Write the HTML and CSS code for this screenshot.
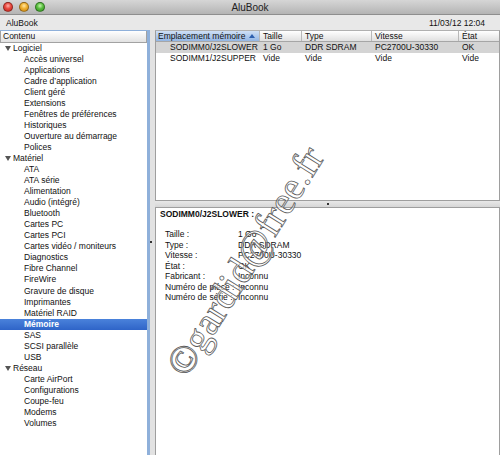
FILE: index.html
```html
<!DOCTYPE html>
<html lang="fr">
<head>
<meta charset="utf-8">
<title>AluBook</title>
<link rel="stylesheet" href="styles.css">
</head>
<body>
<div class="window">
  <div class="titlebar">
    <div class="lights">
      <span class="light red"></span>
      <span class="light yellow"></span>
      <span class="light green"></span>
    </div>
    <div class="title">AluBook</div>
  </div>
  <div class="infobar">
    <span>AluBook</span>
    <span>11/03/12 12:04</span>
  </div>
  <div class="main">
    <div class="sidebar">
      <div class="side-head">Contenu</div>
      <ul class="tree">
        <li class="group"><span class="tri"></span>Logiciel</li>
        <li>Accès universel</li>
        <li>Applications</li>
        <li>Cadre d’application</li>
        <li>Client géré</li>
        <li>Extensions</li>
        <li>Fenêtres de préférences</li>
        <li>Historiques</li>
        <li>Ouverture au démarrage</li>
        <li>Polices</li>
        <li class="group"><span class="tri"></span>Matériel</li>
        <li>ATA</li>
        <li>ATA série</li>
        <li>Alimentation</li>
        <li>Audio (intégré)</li>
        <li>Bluetooth</li>
        <li>Cartes PC</li>
        <li>Cartes PCI</li>
        <li>Cartes vidéo / moniteurs</li>
        <li>Diagnostics</li>
        <li>Fibre Channel</li>
        <li>FireWire</li>
        <li>Gravure de disque</li>
        <li>Imprimantes</li>
        <li>Matériel RAID</li>
        <li class="sel">Mémoire</li>
        <li>SAS</li>
        <li>SCSI parallèle</li>
        <li>USB</li>
        <li class="group"><span class="tri"></span>Réseau</li>
        <li>Carte AirPort</li>
        <li>Configurations</li>
        <li>Coupe-feu</li>
        <li>Modems</li>
        <li>Volumes</li>
      </ul>
    </div>
    <div class="vsplit"><span class="dot"></span></div>
    <div class="right">
      <div class="table-pane">
        <div class="trow thead">
          <div class="c c1 sorted">Emplacement mémoire<span class="sort"></span></div>
          <div class="c c2">Taille</div>
          <div class="c c3">Type</div>
          <div class="c c4">Vitesse</div>
          <div class="c c5">État</div>
        </div>
        <div class="trow selrow">
          <div class="c c1 ind">SODIMM0/J2SLOWER</div>
          <div class="c c2">1 Go</div>
          <div class="c c3">DDR SDRAM</div>
          <div class="c c4">PC2700U-30330</div>
          <div class="c c5">OK</div>
        </div>
        <div class="trow">
          <div class="c c1 ind">SODIMM1/J2SUPPER</div>
          <div class="c c2">Vide</div>
          <div class="c c3">Vide</div>
          <div class="c c4">Vide</div>
          <div class="c c5">Vide</div>
        </div>
      </div>
      <div class="hsplit"><span class="dot"></span></div>
      <div class="detail">
        <div class="dtitle">SODIMM0/J2SLOWER :</div>
        <dl class="props">
          <dt>Taille :</dt><dd>1 Go</dd>
          <dt>Type :</dt><dd>DDR SDRAM</dd>
          <dt>Vitesse :</dt><dd>PC2700U-30330</dd>
          <dt>État :</dt><dd>OK</dd>
          <dt>Fabricant :</dt><dd>Inconnu</dd>
          <dt>Numéro de pièce :</dt><dd>Inconnu</dd>
          <dt>Numéro de série :</dt><dd>Inconnu</dd>
        </dl>
      </div>
    </div>
  </div>
  <div class="watermark">©gardid@free.fr</div>
</div>
</body>
</html>
```

FILE: styles.css
```css
* { box-sizing: border-box; }
html, body { margin: 0; padding: 0; background: #fff; }
body { font-family: "Liberation Sans", Arial, sans-serif; font-size: 8.5px; color: #111; }

.window {
  position: relative;
  width: 500px;
  height: 455px;
  overflow: hidden;
  background: #e6e6e6;
  display: flex;
  flex-direction: column;
}

.titlebar {
  height: 15px;
  flex: none;
  position: relative;
  background: linear-gradient(#d6d6d6, #b4b4b4);
  border-bottom: 1px solid #8e8e8e;
  display: flex;
  align-items: center;
  justify-content: center;
}
.lights {
  position: absolute;
  left: 3px;
  top: 2px;
  display: flex;
  gap: 6px;
}
.light {
  width: 10px;
  height: 10px;
  border-radius: 50%;
  border: 1px solid rgba(0,0,0,0.35);
}
.red { background: radial-gradient(circle at 50% 35%, #ffb0a8 0, #e8473d 45%, #b8231a 100%); }
.yellow { background: radial-gradient(circle at 50% 35%, #ffe7a6 0, #f0b02e 45%, #c07c10 100%); }
.green { background: radial-gradient(circle at 50% 35%, #c9f5b0 0, #58be3e 45%, #2f8a1f 100%); }
.title { font-size: 10px; color: #222; padding-top: 1px; }

.infobar {
  height: 15px;
  flex: none;
  display: flex;
  justify-content: space-between;
  align-items: center;
  padding: 1px 15px 0 6px;
  background: #e8e8e8;
  color: #111;
}

.main {
  flex: 1;
  display: flex;
  min-height: 0;
}

.sidebar {
  width: 150px;
  flex: none;
  background: #fff;
  border-top: 1px solid #8fb0da;
  border-right: 3px solid #8fb0da;
  display: flex;
  flex-direction: column;
}
.side-head {
  height: 11.5px;
  flex: none;
  background: linear-gradient(#ffffff, #e2e2e2);
  border: 1px solid #a2a2a2;
  border-top: 0;
  padding-left: 2px;
  line-height: 10px;
}
.tree { list-style: none; margin: 0; padding: 0; }
.tree li {
  height: 11.06px;
  line-height: 11.06px;
  padding-left: 24px;
  white-space: nowrap;
}
.tree li.group { padding-left: 5px; display: flex; align-items: center; }
.tri {
  width: 0; height: 0;
  border-left: 3px solid transparent;
  border-right: 3px solid transparent;
  border-top: 5px solid #555;
  margin-right: 2px;
}
.tree li.sel {
  background: linear-gradient(#4a82db, #2f64c8);
  color: #fff;
  font-weight: bold;
}

.vsplit {
  width: 5px;
  flex: none;
  background: #e2e2e2;
  position: relative;
}
.vsplit .dot {
  position: absolute;
  left: 0; top: 211px;
  width: 2px; height: 2px;
  background: #333;
}

.right {
  flex: 1;
  display: flex;
  flex-direction: column;
  min-width: 0;
}
.table-pane {
  height: 171px;
  flex: none;
  background: #fff;
  border: 1px solid #9e9e9e;
  border-top: 1px solid #b0b0b0;
}
.trow { display: flex; height: 11px; line-height: 11px; }
.c { white-space: nowrap; overflow: hidden; padding-left: 3px; }
.c1 { width: 104px; }
.c2 { width: 42px; }
.c3 { width: 70px; }
.c4 { width: 87px; }
.c5 { flex: 1; }
.c.ind { padding-left: 14px; }
.thead {
  height: 10.5px;
  line-height: 10px;
  background: linear-gradient(#ffffff, #e0e0e0);
  border-bottom: 1px solid #a6a6a6;
}
.thead .c { border-right: 1px solid #b8b8b8; }
.thead .c5 { border-right: 0; }
.thead .sorted {
  background: linear-gradient(#cfe0f6, #93b6e4);
  display: flex;
  justify-content: space-between;
  align-items: center;
  padding-right: 4px;
  padding-left: 2px;
}
.sort {
  width: 0; height: 0;
  border-left: 3px solid transparent;
  border-right: 3px solid transparent;
  border-bottom: 4px solid #2d5fae;
}
.selrow { background: #d4d4d4; }

.hsplit {
  height: 6px;
  flex: none;
  background: linear-gradient(#e8e8e8, #d6d6d6);
  position: relative;
}
.hsplit .dot {
  position: absolute;
  left: 172px; top: 2px;
  width: 2px; height: 2px;
  background: #333;
}

.detail {
  flex: 1;
  background: #fff;
  border: 1px solid #9e9e9e;
  border-bottom: 0;
  padding: 1px 0 0 4px;
}
.dtitle { font-weight: bold; line-height: 11px; }
.props {
  margin: 9px 0 0 5px;
  display: grid;
  grid-template-columns: 73px auto;
  grid-auto-rows: 10.5px;
  line-height: 10.5px;
}
.props dt, .props dd { margin: 0; white-space: nowrap; }

.watermark {
  position: absolute;
  left: 95px;
  top: 240px;
  width: 300px;
  text-align: center;
  font-family: "Liberation Serif", "Times New Roman", serif;
  font-size: 39px;
  line-height: 42px;
  color: rgba(255,255,255,0.6);
  -webkit-text-stroke: 0.8px #5a5a5a;
  transform: rotate(-58deg);
  transform-origin: 50% 50%;
  pointer-events: none;
  white-space: nowrap;
}
```
